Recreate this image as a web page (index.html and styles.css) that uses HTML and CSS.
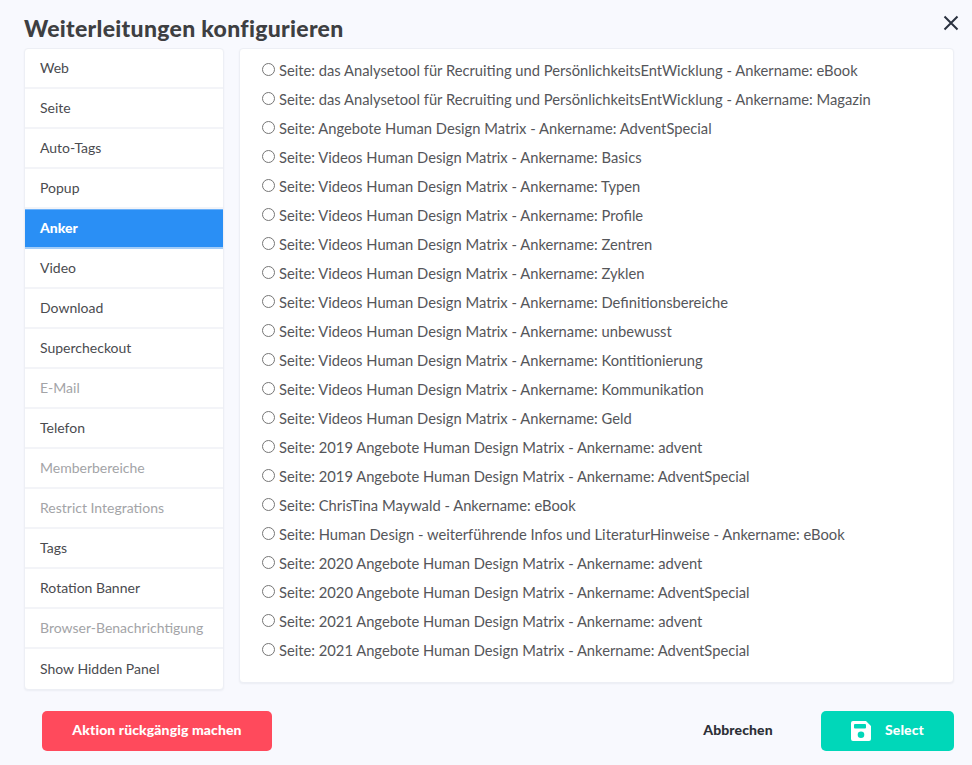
FILE: index.html
```html
<!DOCTYPE html>
<html lang="de">
<head>
<meta charset="utf-8">
<title>Weiterleitungen konfigurieren</title>
<link rel="stylesheet" href="styles.css">
</head>
<body>
<div class="modal">
  <header class="head">
    <h1 class="title">Weiterleitungen konfigurieren</h1>
    <button class="close" type="button" aria-label="Schließen">
      <svg width="16" height="16" viewBox="0 0 16 16"><path d="M1.500 1.500l13 13M14.500 1.500l-13 13" fill="none" stroke="#2b3240" stroke-width="2"/></svg>
    </button>
  </header>
  <div class="main">
    <nav class="tabs">
      <a class="tab">Web</a>
      <a class="tab">Seite</a>
      <a class="tab">Auto-Tags</a>
      <a class="tab">Popup</a>
      <a class="tab active">Anker</a>
      <a class="tab">Video</a>
      <a class="tab">Download</a>
      <a class="tab">Supercheckout</a>
      <a class="tab muted">E-Mail</a>
      <a class="tab">Telefon</a>
      <a class="tab muted">Memberbereiche</a>
      <a class="tab muted">Restrict Integrations</a>
      <a class="tab">Tags</a>
      <a class="tab">Rotation Banner</a>
      <a class="tab muted">Browser-Benachrichtigung</a>
      <a class="tab">Show Hidden Panel</a>
    </nav>
    <form class="panel">
      <label class="opt"><input type="radio" name="a"><span>Seite: das Analysetool für Recruiting und PersönlichkeitsEntWicklung - Ankername: eBook</span></label>
      <label class="opt"><input type="radio" name="a"><span>Seite: das Analysetool für Recruiting und PersönlichkeitsEntWicklung - Ankername: Magazin</span></label>
      <label class="opt"><input type="radio" name="a"><span>Seite: Angebote Human Design Matrix - Ankername: AdventSpecial</span></label>
      <label class="opt"><input type="radio" name="a"><span>Seite: Videos Human Design Matrix - Ankername: Basics</span></label>
      <label class="opt"><input type="radio" name="a"><span>Seite: Videos Human Design Matrix - Ankername: Typen</span></label>
      <label class="opt"><input type="radio" name="a"><span>Seite: Videos Human Design Matrix - Ankername: Profile</span></label>
      <label class="opt"><input type="radio" name="a"><span>Seite: Videos Human Design Matrix - Ankername: Zentren</span></label>
      <label class="opt"><input type="radio" name="a"><span>Seite: Videos Human Design Matrix - Ankername: Zyklen</span></label>
      <label class="opt"><input type="radio" name="a"><span>Seite: Videos Human Design Matrix - Ankername: Definitionsbereiche</span></label>
      <label class="opt"><input type="radio" name="a"><span>Seite: Videos Human Design Matrix - Ankername: unbewusst</span></label>
      <label class="opt"><input type="radio" name="a"><span>Seite: Videos Human Design Matrix - Ankername: Kontitionierung</span></label>
      <label class="opt"><input type="radio" name="a"><span>Seite: Videos Human Design Matrix - Ankername: Kommunikation</span></label>
      <label class="opt"><input type="radio" name="a"><span>Seite: Videos Human Design Matrix - Ankername: Geld</span></label>
      <label class="opt"><input type="radio" name="a"><span>Seite: 2019 Angebote Human Design Matrix - Ankername: advent</span></label>
      <label class="opt"><input type="radio" name="a"><span>Seite: 2019 Angebote Human Design Matrix - Ankername: AdventSpecial</span></label>
      <label class="opt"><input type="radio" name="a"><span>Seite: ChrisTina Maywald - Ankername: eBook</span></label>
      <label class="opt"><input type="radio" name="a"><span>Seite: Human Design - weiterführende Infos und LiteraturHinweise - Ankername: eBook</span></label>
      <label class="opt"><input type="radio" name="a"><span>Seite: 2020 Angebote Human Design Matrix - Ankername: advent</span></label>
      <label class="opt"><input type="radio" name="a"><span>Seite: 2020 Angebote Human Design Matrix - Ankername: AdventSpecial</span></label>
      <label class="opt"><input type="radio" name="a"><span>Seite: 2021 Angebote Human Design Matrix - Ankername: advent</span></label>
      <label class="opt"><input type="radio" name="a"><span>Seite: 2021 Angebote Human Design Matrix - Ankername: AdventSpecial</span></label>
    </form>
  </div>
  <footer class="foot">
    <button class="btn undo" type="button">Aktion rückgängig machen</button>
    <div class="actions">
      <button class="btn cancel" type="button">Abbrechen</button>
      <button class="btn select" type="button">
        <svg width="20" height="20" viewBox="0 0 20 20"><path fill="#fff" fill-rule="evenodd" d="M2 0h13l5 5v13a2 2 0 0 1-2 2H2a2 2 0 0 1-2-2V2a2 2 0 0 1 2-2zm2 3a1 1 0 0 0-1 1v2.500a1 1 0 0 0 1 1h10a1 1 0 0 0 1-1V4a1 1 0 0 0-1-1zm6 7.500a3.300 3.300 0 1 0 0 6.600 3.300 3.300 0 0 0 0-6.600z"/></svg>
        <span class="btn-label">Select</span>
      </button>
    </div>
  </footer>
</div>
</body>
</html>
```
FILE: styles.css
```css
* { box-sizing: border-box; }
html, body { margin: 0; height: 100%; }
body {
  background: #f8f9fe;
  font-family: "Lato", "Open Sans", sans-serif;
  color: #3e3f42;
  overflow: hidden;
}
.modal { width: 972px; height: 765px; padding: 13px 18px 0 24px; display: flex; flex-direction: column; }
.head { display: flex; justify-content: space-between; align-items: flex-start; height: 35px; }
.title { margin: 0; font-size: 23px; line-height: 30px; font-weight: 900; letter-spacing: .3px; color: #3e3f42; }
.close { border: 0; background: none; padding: 0; margin: 2px -5px 0 0; width: 16px; height: 16px; display: block; }
.close svg { display: block; }
.main { display: flex; align-items: flex-start; gap: 15px; }
.tabs {
  width: 200px; flex: none; display: flex; flex-direction: column;
  background: #fff; border: 1px solid #edeff5; border-radius: 4px;
  box-shadow: 0 1px 2px rgba(40, 50, 80, .06);
  height: 642px; overflow: hidden;
}
.tab {
  height: 40px; display: flex; align-items: center; padding: 0 15px 2px;
  font-size: 14px; color: #4a4b4f; border-bottom: 2px solid #f3f4f8; flex: none;
}
.tab:last-child { border-bottom: 0; }
.tab.active { background: #2a8ff5; color: #fff; font-weight: 900; border-top: 1px solid #6fb2f8; border-bottom: 2px solid #a3cdf8; }
.tab.muted { color: #a3a4a7; }
.panel {
  width: 715px; height: 635px; background: #fff; border: 1px solid #edeff5; border-radius: 4px;
  box-shadow: 0 1px 2px rgba(40, 50, 80, .06);
  padding: 7px 22px; display: flex; flex-direction: column;
}
.opt { height: 29px; display: flex; align-items: center; font-size: 14.740px; color: #55565a; flex: none; }
.opt span { margin-bottom: 2px; }
.opt input { width: 13px; height: 13px; margin: -3px 4px 0 0; flex: none; accent-color: #555; }
.foot { display: flex; justify-content: space-between; align-items: center; padding: 21px 0 0 18px; }
.actions { display: flex; align-items: center; }
.btn {
  height: 40px; border: 0; border-radius: 5px; font-family: inherit; font-size: 14px; font-weight: 900;
  display: flex; align-items: center; justify-content: center; padding: 0 0 4px; letter-spacing: .1px;
}
.undo { width: 230px; background: #ff4a5c; color: #fff; }
.cancel { width: 100px; margin-right: 33px; background: none; color: #2c2f36; }
.select { width: 133px; background: #00d7b9; color: #fff; gap: 14px; padding: 0; }
.select svg { display: block; }
.btn-label { margin-bottom: 4px; }
```
